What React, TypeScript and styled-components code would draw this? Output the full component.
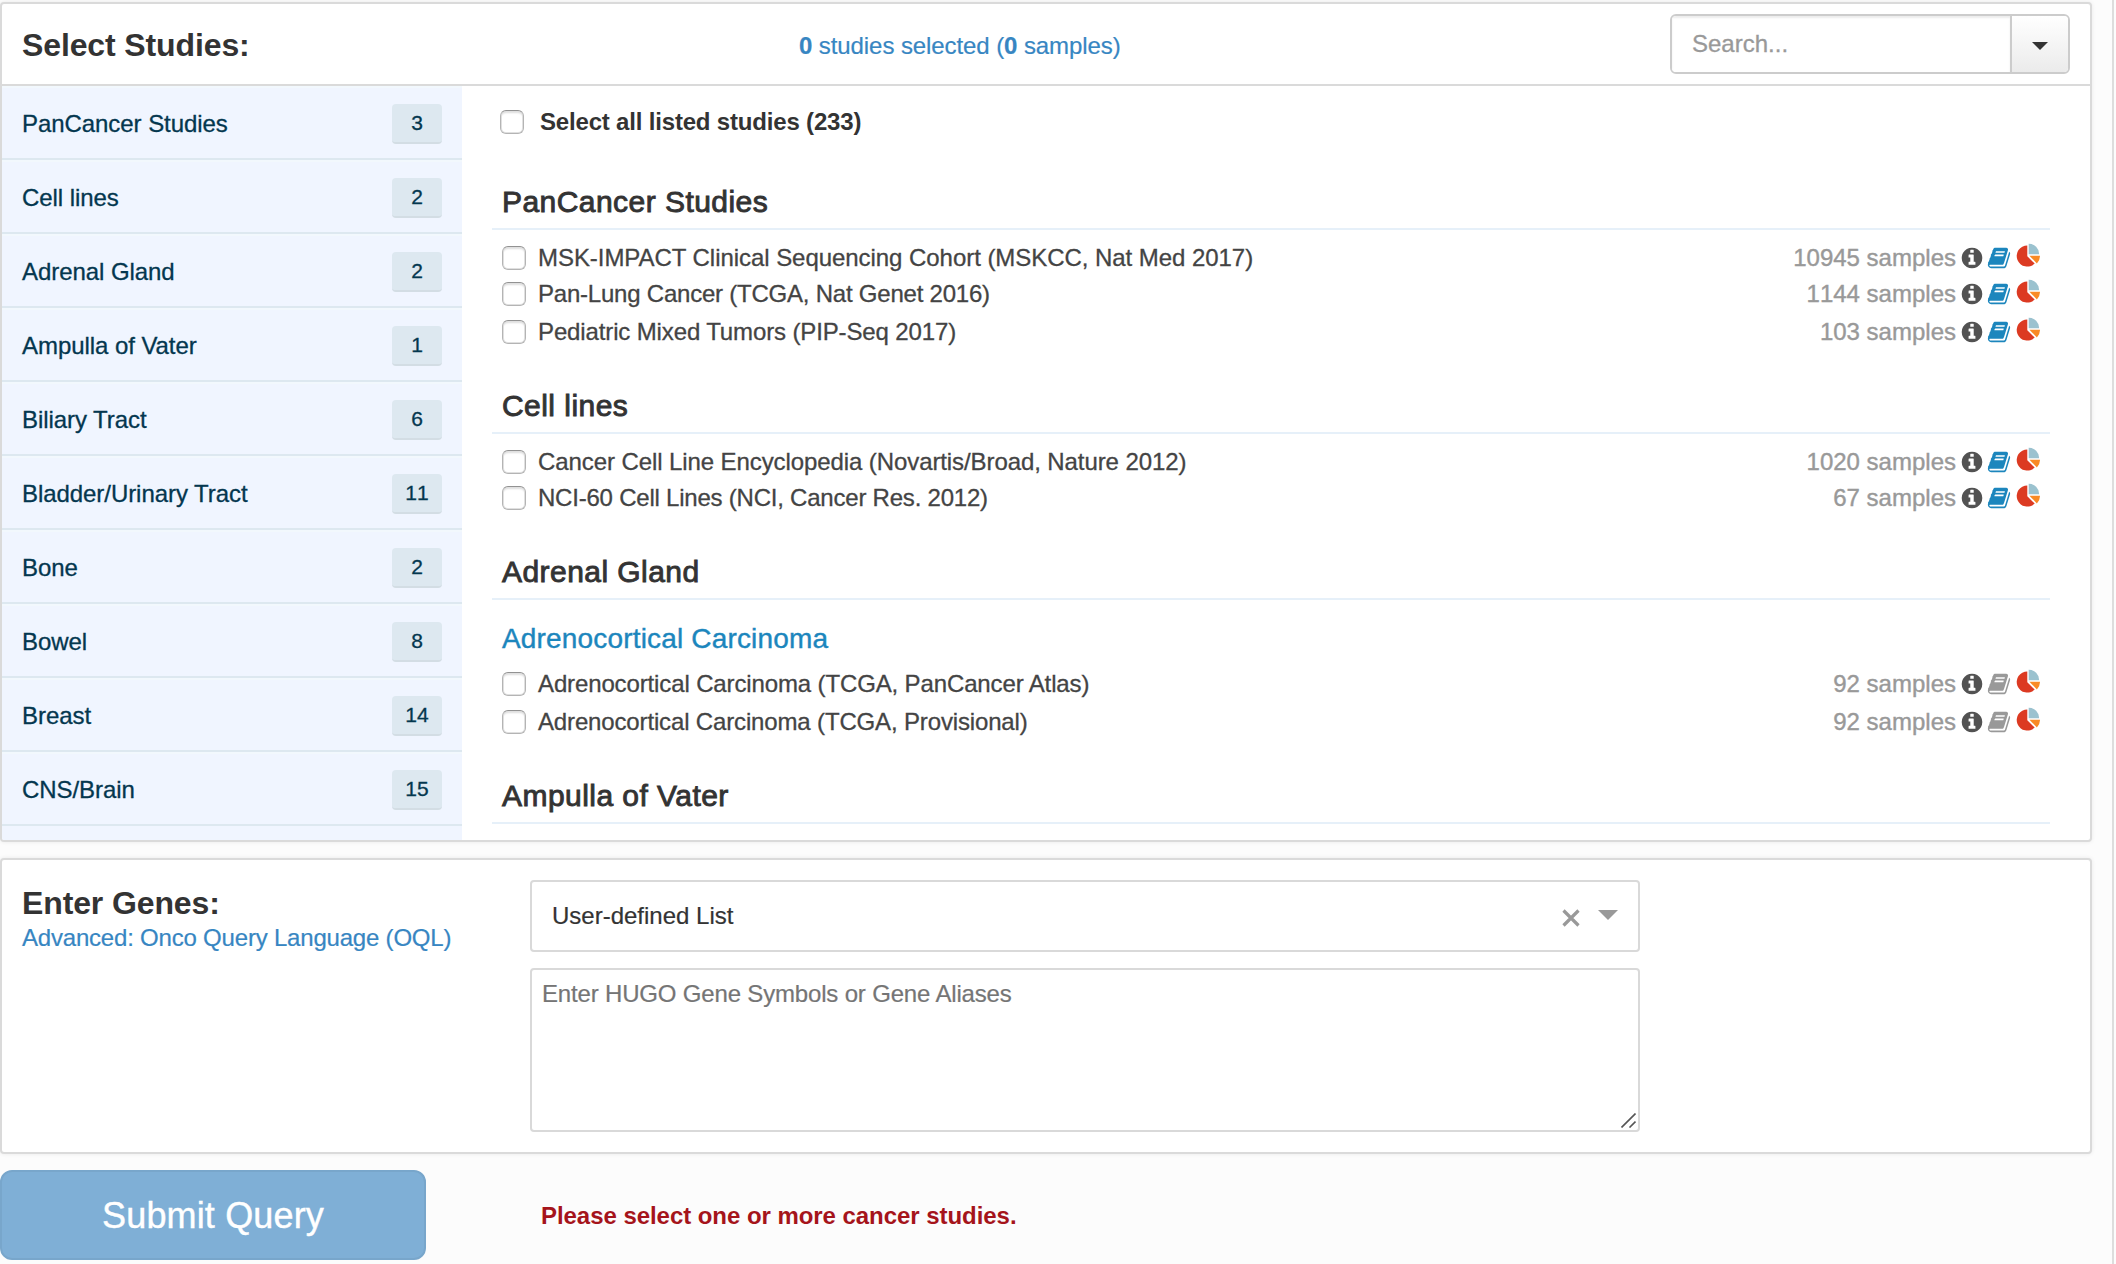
import React from 'react';
import styled, { createGlobalStyle } from 'styled-components';

const GlobalStyle = createGlobalStyle`
  * { box-sizing: border-box; }
  html, body { margin: 0; padding: 0; }
  body {
    background: #fcfcfc;
    font-family: "Liberation Sans", Arial, sans-serif;
    font-size: 24px;
    line-height: 34px;
    color: #333;
    overflow: hidden;
  }
`;

const Page = styled.div`
  display: flex;
  flex-direction: column;
  width: 2114px;
  height: 1264px;
  padding-top: 2px;
  border-right: 2px solid #ddd;
  background: #fcfcfc;
`;

const Panel = styled.section`
  width: 2092px;
  border: 2px solid #dadada;
  border-radius: 4px;
  background: #fff;
  box-shadow: 0 0 4px rgba(0, 0, 0, 0.08);
`;

const StudiesPanel = styled(Panel)`
  height: 840px;
  display: flex;
  flex-direction: column;
  overflow: hidden;
`;

const Header = styled.header`
  display: flex;
  flex: none;
  justify-content: space-between;
  align-items: center;
  height: 82px;
  padding: 0 20px;
  border-bottom: 2px solid #dadada;
`;

const Title = styled.h2`
  margin: 0;
  font-size: 32px;
  line-height: 36px;
  font-weight: 700;
  letter-spacing: -0.12px;
`;

const HeaderTitle = styled(Title)`
  width: 777px;
  padding-top: 2px;
`;

const Link = styled.a`
  color: #3786c2;
  text-decoration: none;
  white-space: nowrap;
  -webkit-text-stroke: 0.2px #3786c2;
`;

const HeaderLink = styled(Link)`
  flex: 1;
  padding-top: 3px;
  letter-spacing: -0.085px;
`;

const SearchGroup = styled.div`
  display: flex;
  width: 400px;
  height: 60px;
  border: 2px solid #ccc;
  border-radius: 6px;
  overflow: hidden;
`;

const SearchInput = styled.input`
  flex: 1;
  min-width: 0;
  border: 0;
  outline: 0;
  padding: 0 20px;
  font: inherit;
  color: #333;
  background: #fff;
  box-shadow: inset 0 2px 2px rgba(0, 0, 0, 0.075);
  &::placeholder {
    color: #999;
    opacity: 1;
    -webkit-text-stroke: 0.3px #999;
  }
`;

const SearchToggle = styled.button`
  display: flex;
  align-items: center;
  justify-content: center;
  width: 58px;
  padding: 4px 0 0;
  border: 0;
  border-left: 2px solid #ccc;
  background: linear-gradient(#fff, #ebebeb);
`;

const Caret = styled.span<{ $size: number; $height: number; $color: string }>`
  width: 0;
  height: 0;
  border-left: ${(p) => p.$size}px solid transparent;
  border-right: ${(p) => p.$size}px solid transparent;
  border-top: ${(p) => p.$height}px solid ${(p) => p.$color};
`;

const SelectCaret = styled(Caret)`
  margin-bottom: 2px;
`;

const StudiesBody = styled.div`
  display: flex;
  flex: 1;
  min-height: 0;
`;

const Sidebar = styled.ul`
  flex: none;
  width: 460px;
  margin: 0;
  padding: 0;
  list-style: none;
  background: #f0f5ff;
  overflow: hidden;
`;

const SidebarItem = styled.li`
  display: flex;
  justify-content: space-between;
  align-items: flex-start;
  height: 74px;
  padding: 18px 20px 0;
  border-bottom: 2px solid #dde8f0;
  box-shadow: inset 0 2px 0 #f2f8fd;
  color: #04374f;
`;

const SidebarLabel = styled.span`
  padding-top: 3px;
  letter-spacing: -0.06px;
  -webkit-text-stroke: 0.3px #04374f;
`;

const Badge = styled.span`
  width: 50px;
  height: 40px;
  border-radius: 4px;
  border-bottom: 2px solid #d3dde4;
  background: #dde8f0;
  font-size: 21px;
  line-height: 37px;
  text-align: center;
  font-kerning: none;
  -webkit-text-stroke: 0.3px #04374f;
`;

const StudyList = styled.div`
  flex: 1;
  padding: 24px 40px 0 30px;
  overflow: hidden;
`;

const Check = styled.input.attrs({ type: 'checkbox' })`
  appearance: none;
  flex: none;
  width: 24px;
  height: 24px;
  margin: 0;
  border: 1px solid #b4b4b4;
  border-top-color: #929292;
  border-radius: 6px;
  background: #fff;
  box-shadow: inset 0 0 0 1px #e0e0e0, inset 0 3px 2px -1px #dedede;
`;

const SelectAll = styled.label`
  display: flex;
  align-items: flex-start;
  gap: 16px;
  height: 66px;
  padding-left: 8px;
  font-weight: 700;
  line-height: 24px;
  letter-spacing: -0.18px;
`;

const GroupHeading = styled.h3`
  height: 54px;
  margin: 0 0 16px;
  padding: 9px 10px 0;
  border-bottom: 2px solid #e6f0f9;
  font-size: 30px;
  line-height: 34px;
  font-weight: 400;
  letter-spacing: 0.45px;
  -webkit-text-stroke: 0.9px #333;
`;

const SubHeading = styled.h4`
  height: 56px;
  margin: 0;
  padding: 6px 10px 0;
  font-size: 28px;
  line-height: 34px;
  font-weight: 400;
  color: #1c86bd;
  letter-spacing: 0.17px;
  -webkit-text-stroke: 0.4px #1c86bd;
`;

const Group = styled.section<{ $height: number }>`
  height: ${(p) => p.$height}px;
`;

const StudyRow = styled.div<{ $height: number }>`
  display: flex;
  align-items: flex-start;
  height: ${(p) => p.$height}px;
  padding: 0 10px;
  line-height: 24px;
`;

const StudyName = styled.span<{ $tracking: number }>`
  flex: 1;
  padding-left: 12px;
  color: #444;
  white-space: nowrap;
  letter-spacing: ${(p) => p.$tracking}px;
  -webkit-text-stroke: 0.3px #444;
`;

const Samples = styled.span`
  color: #999;
  padding-right: 4px;
  font-kerning: none;
  -webkit-text-stroke: 0.4px #999;
`;

const Icon = styled.svg<{ $color?: string; $gap?: number }>`
  flex: none;
  width: 24px;
  height: 24px;
  margin-right: ${(p) => p.$gap ?? 0}px;
  fill: ${(p) => p.$color ?? 'none'};
`;

const PieIcon = styled(Icon)`
  margin-top: -3px;
`;

const GenesPanel = styled(Panel)`
  display: flex;
  height: 296px;
  margin-top: 16px;
  padding: 20px;
`;

const GenesIntro = styled.div`
  width: 508px;
  padding-top: 5px;
`;

const GenesLink = styled(Link)`
  display: block;
  line-height: 34px;
  letter-spacing: -0.2px;
`;

const GenesForm = styled.div`
  display: flex;
  flex-direction: column;
  gap: 16px;
  width: 1110px;
`;

const SelectBox = styled.div`
  display: flex;
  align-items: center;
  height: 72px;
  padding: 0 20px;
  border: 2px solid #d9d9d9;
  border-radius: 4px;
`;

const SelectValue = styled.span`
  flex: 1;
  -webkit-text-stroke: 0.2px #333;
`;

const ClearIcon = styled.svg`
  width: 18px;
  height: 18px;
  margin: 4px 18px 0 0;
  stroke: #999;
  stroke-width: 3.2;
`;

const GeneInput = styled.div`
  display: flex;
  flex-direction: column;
  justify-content: space-between;
  height: 164px;
  padding: 7px 2px 2px 10px;
  border: 2px solid #d9d9d9;
  border-radius: 4px;
  color: #757575;
  letter-spacing: -0.17px;
  -webkit-text-stroke: 0.2px #757575;
`;

const ResizeGrip = styled.svg`
  align-self: flex-end;
  width: 15px;
  height: 15px;
  stroke: #555;
  stroke-width: 1.6;
`;

const Footer = styled.footer`
  display: flex;
  align-items: center;
  gap: 115px;
  padding-top: 16px;
`;

const SubmitButton = styled.button`
  width: 426px;
  height: 90px;
  padding: 1px 0 0;
  border: 2px solid #78a6cb;
  border-radius: 12px;
  background: #7fafd6;
  color: #fff;
  font-family: inherit;
  font-size: 36px;
  letter-spacing: 0.15px;
  -webkit-text-stroke: 0.4px #fff;
`;

const ErrorText = styled.strong`
  padding-top: 1px;
  color: #a5141b;
  font-weight: 700;
  letter-spacing: -0.05px;
`;

const INFO_PATH =
  'M1152 1376v-160q0-14-9-23t-23-9h-96v-512q0-14-9-23t-23-9h-320q-14 0-23 9t-9 23v160q0 14 9 23t23 9h96v320h-96q-14 0-23 9t-9 23v160q0 14 9 23t23 9h448q14 0 23-9t9-23zm-128-896v-160q0-14-9-23t-23-9h-192q-14 0-23 9t-9 23v160q0 14 9 23t23 9h192q14 0 23-9t9-23zm640 416q0 209-103 385.5t-279.5 279.5-385.5 103-385.5-103-279.5-279.5-103-385.5 103-385.5 279.5-279.5 385.5-103 385.5 103 279.5 279.5 103 385.5z';

const BOOK_PATH =
  'M1703 478q40 57 18 129l-275 906q-19 64-76.5 107.5t-122.5 43.5h-923q-77 0-148.5-53.5t-99.5-131.5q-24-67-2-127 0-4 3-27t4-37q1-8-3-21.5t-3-19.5q2-11 8-21t16.5-23.5 16.5-23.5q23-38 45-91.5t30-91.5q3-10 .5-30t-.5-28q3-11 17-28t17-23q21-36 42-92t25-90q1-9-2.5-32t.5-28q4-13 22-30.5t22-22.5q19-26 42.5-84.5t27.5-96.5q1-8-3-25.5t-2-26.5q2-8 9-18t18-23 17-21q8-12 16.5-30.5t15-35 16-36 19.5-32 26.5-23.5 36-11.5 47.5 5.5l-1 3q38-9 51-9h761q74 0 114 56t18 130l-274 906q-36 119-71.5 153.5t-128.5 34.5h-869q-27 0-38 15-11 16-1 43 24 70 144 70h923q29 0 56-15.5t35-41.5l300-987q7-22 5-57 38 15 59 43zm-1064 2q-4 13 2 22.5t20 9.5h608q13 0 25.5-9.5t16.5-22.5l21-64q4-13-2-22.5t-20-9.5h-608q-13 0-25.5 9.5t-16.5 22.5zm-83 256q-4 13 2 22.5t20 9.5h608q13 0 25.5-9.5t16.5-22.5l21-64q4-13-2-22.5t-20-9.5h-608q-13 0-25.5 9.5t-16.5 22.5z';

interface Study {
  name: string;
  samples: number;
  height: number;
  tracking: number;
  unpublished?: boolean;
}

interface StudyGroup {
  title: string;
  subtitle?: string;
  height: number;
  studies: Study[];
}

const categories: [string, number][] = [
  ['PanCancer Studies', 3],
  ['Cell lines', 2],
  ['Adrenal Gland', 2],
  ['Ampulla of Vater', 1],
  ['Biliary Tract', 6],
  ['Bladder/Urinary Tract', 11],
  ['Bone', 2],
  ['Bowel', 8],
  ['Breast', 14],
  ['CNS/Brain', 15],
];

const groups: StudyGroup[] = [
  {
    title: 'PanCancer Studies',
    height: 204,
    studies: [
      {
        name: 'MSK-IMPACT Clinical Sequencing Cohort (MSKCC, Nat Med 2017)',
        samples: 10945,
        height: 36,
        tracking: -0.05,
      },
      { name: 'Pan-Lung Cancer (TCGA, Nat Genet 2016)', samples: 1144, height: 38, tracking: -0.22 },
      { name: 'Pediatric Mixed Tumors (PIP-Seq 2017)', samples: 103, height: 36, tracking: -0.13 },
    ],
  },
  {
    title: 'Cell lines',
    height: 166,
    studies: [
      {
        name: 'Cancer Cell Line Encyclopedia (Novartis/Broad, Nature 2012)',
        samples: 1020,
        height: 36,
        tracking: -0.09,
      },
      { name: 'NCI-60 Cell Lines (NCI, Cancer Res. 2012)', samples: 67, height: 36, tracking: -0.22 },
    ],
  },
  {
    title: 'Adrenal Gland',
    subtitle: 'Adrenocortical Carcinoma',
    height: 224,
    studies: [
      {
        name: 'Adrenocortical Carcinoma (TCGA, PanCancer Atlas)',
        samples: 92,
        height: 38,
        tracking: -0.13,
        unpublished: true,
      },
      {
        name: 'Adrenocortical Carcinoma (TCGA, Provisional)',
        samples: 92,
        height: 36,
        tracking: -0.15,
        unpublished: true,
      },
    ],
  },
  { title: 'Ampulla of Vater', height: 70, studies: [] },
];

function Row({ study }: { study: Study }) {
  return (
    <StudyRow $height={study.height}>
      <Check />
      <StudyName $tracking={study.tracking}>{study.name}</StudyName>
      <Samples>{study.samples} samples</Samples>
      <Icon viewBox="0 0 1792 1792" $color="#525252" $gap={3}>
        <path d={INFO_PATH} />
      </Icon>
      <Icon viewBox="0 0 1792 1792" $color={study.unpublished ? '#999' : '#1c86bd'} $gap={5}>
        <path d={BOOK_PATH} />
      </Icon>
      <PieIcon viewBox="0 0 24 24">
        <path d="M11.3 2.4A10.6 10.6 0 1 0 18.7 20.6L11.3 13.2Z" fill="#dc3a22" />
        <path d="M12.7 0.8V11.2H23.2A10.4 10.4 0 0 0 12.7 0.8Z" fill="#9bc2cf" />
        <path d="M13.4 12.7H24A10.8 10.8 0 0 1 20.9 20.4Z" fill="#f98a25" />
      </PieIcon>
    </StudyRow>
  );
}

export default function App() {
  return (
    <>
      <GlobalStyle />
      <Page>
        <StudiesPanel>
          <Header>
            <HeaderTitle>Select Studies:</HeaderTitle>
            <HeaderLink>
              <b>0</b> studies selected (<b>0</b> samples)
            </HeaderLink>
            <SearchGroup>
              <SearchInput placeholder="Search..." />
              <SearchToggle>
                <Caret $size={8} $height={8} $color="#333" />
              </SearchToggle>
            </SearchGroup>
          </Header>
          <StudiesBody>
            <Sidebar>
              {categories.map(([name, count]) => (
                <SidebarItem key={name}>
                  <SidebarLabel>{name}</SidebarLabel>
                  <Badge>{count}</Badge>
                </SidebarItem>
              ))}
            </Sidebar>
            <StudyList>
              <SelectAll>
                <Check />
                <span>Select all listed studies (233)</span>
              </SelectAll>
              {groups.map((group) => (
                <Group key={group.title} $height={group.height}>
                  <GroupHeading>{group.title}</GroupHeading>
                  {group.subtitle && <SubHeading>{group.subtitle}</SubHeading>}
                  {group.studies.map((study) => (
                    <Row key={study.name} study={study} />
                  ))}
                </Group>
              ))}
            </StudyList>
          </StudiesBody>
        </StudiesPanel>

        <GenesPanel>
          <GenesIntro>
            <Title>Enter Genes:</Title>
            <GenesLink>Advanced: Onco Query Language (OQL)</GenesLink>
          </GenesIntro>
          <GenesForm>
            <SelectBox>
              <SelectValue>User-defined List</SelectValue>
              <ClearIcon viewBox="0 0 18 18">
                <path d="M1.5 1.5L16.5 16.5M16.5 1.5L1.5 16.5" />
              </ClearIcon>
              <SelectCaret $size={10} $height={10} $color="#999" />
            </SelectBox>
            <GeneInput>
              Enter HUGO Gene Symbols or Gene Aliases
              <ResizeGrip viewBox="0 0 15 15">
                <path d="M0.5 14.5L14.5 0.5M8.5 14.5L14.5 8.5" />
              </ResizeGrip>
            </GeneInput>
          </GenesForm>
        </GenesPanel>

        <Footer>
          <SubmitButton>Submit Query</SubmitButton>
          <ErrorText>Please select one or more cancer studies.</ErrorText>
        </Footer>
      </Page>
    </>
  );
}
